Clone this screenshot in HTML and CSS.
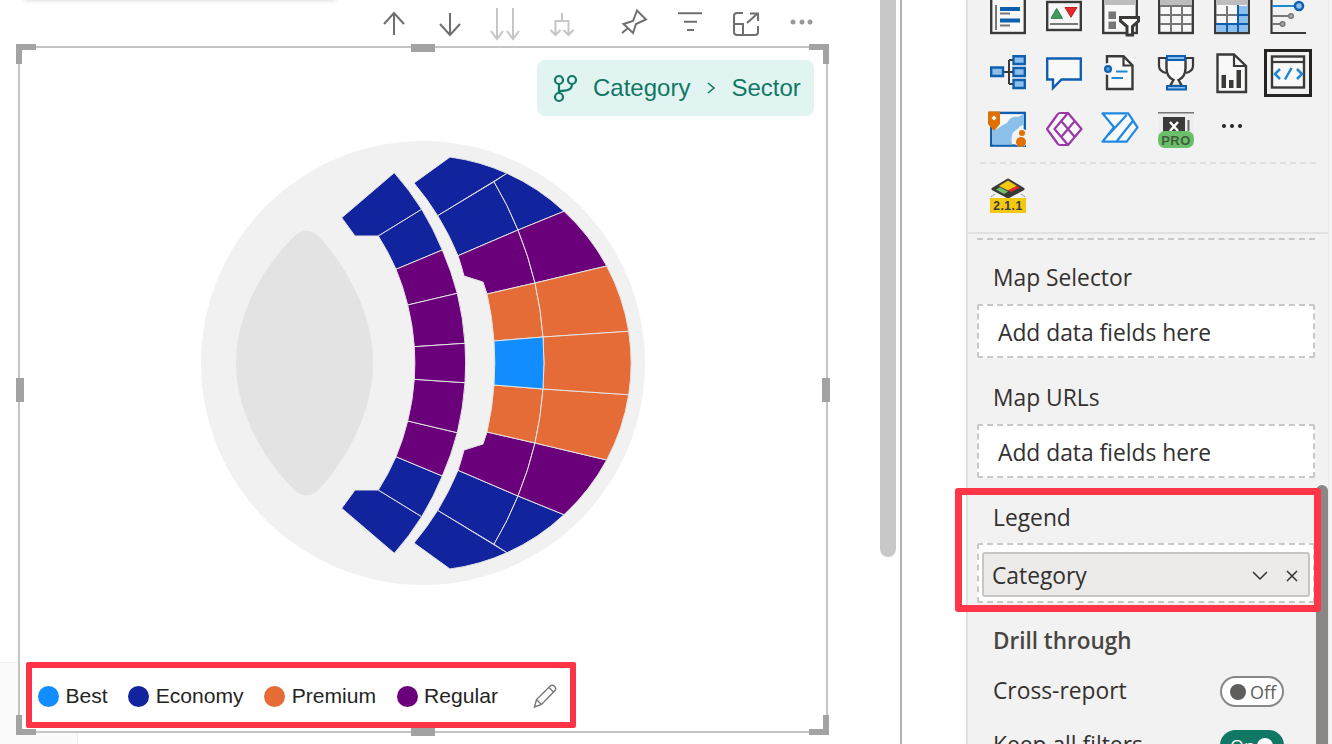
FILE: index.html
```html
<!DOCTYPE html>
<html lang="en">

<head>
	<meta charset="UTF-8" />
	<meta name="viewport" content="width=device-width, initial-scale=1.0" />
	<title>Seating map visual</title>
	<link rel="stylesheet" href="styles.css">
</head>

<body>
	<main class="canvas">
		<div class="page-tab"></div>
		<div class="ghost"></div>

		<div class="toolbar">
			<span class="tool"><svg class="tool-icon" viewBox="0 0 32 32"><path d="M16 7V29M6 18L16 7L26 18" /></svg></span>
			<span class="tool"><svg class="tool-icon" viewBox="0 0 32 32"><path d="M16 7V29M6 18L16 29L26 18" /></svg></span>
			<span class="tool"><svg class="tool-icon off" viewBox="0 0 32 32"><path d="M7 2V33M1 25L7 33L13 25M23 2V33M17 25L23 33L29 25" /></svg></span>
			<span class="tool"><svg class="tool-icon off" viewBox="0 0 32 32"><path d="M16 7V15M9.5 29V15H22.5V29M4.500 24L9.500 29L14.500 24M17.500 24L22.500 29L27.500 24" /></svg></span>
			<span class="tool tool-gap"><svg class="tool-icon" viewBox="0 0 32 32"><path d="M5.500 18L15 15L19 4.500L28 13.500L18 18L15 27ZM4 27L10 22" /></svg></span>
			<span class="tool"><svg class="tool-icon" viewBox="0 0 32 32"><path d="M4 7.300H28M10 15.700H23M13 24H20" /></svg></span>
			<span class="tool"><svg class="tool-icon" viewBox="0 0 32 32"><path d="M13 7H7A3 3 0 0 0 4 10V26A3 3 0 0 0 7 29H25A3 3 0 0 0 28 26V20M4 18H13V29M17 17L27 8M20 7.500H28V15" /></svg></span>
			<span class="tool"><svg class="tool-icon" viewBox="0 0 32 32"><circle class="dot" cx="7" cy="16" r="2.500" /><circle class="dot" cx="16" cy="16" r="2.500" /><circle class="dot" cx="24" cy="16" r="2.500" /></svg></span>
		</div>

		<section class="frame">
			<span class="corner tl"></span>
			<span class="corner tr"></span>
			<span class="corner bl"></span>
			<span class="corner br"></span>
			<span class="grip grip-top"></span>
			<span class="grip grip-bottom"></span>
			<span class="grip grip-left"></span>
			<span class="grip grip-right"></span>

			<div class="crumb">
				<svg class="crumb-icon" viewBox="0 0 24 28">
					<circle cx="6" cy="6" r="4" />
					<circle cx="19" cy="6" r="4" />
					<circle cx="6" cy="23" r="4" />
					<path d="M6 10V19M19 10C19 16 14 17 6 17" />
				</svg>
				<span>Category</span>
				<svg class="crumb-sep" viewBox="0 0 10 14"><path d="M2 2L8 7L2 12" /></svg>
				<span>Sector</span>
			</div>

			<svg class="seatmap" viewBox="201 141 444 444">
				<circle cx="423" cy="363" r="222" fill="#f1f1f1" />
				<path fill="#e3e3e3" d="M236 363C236 315 262 268 295 235.500Q306 226 318 235.500C348 268 373 315 373 363C373 411 348 458 318 490.500Q306 500 295 490.500C262 458 236 411 236 363Z" />
				<g id="half" stroke="#e4e4e4" stroke-width="1" stroke-linejoin="round">
					<path fill="#12239e" d="M414 183L450 157A208 208 0 0 1 507 173.300L437.700 215.700A287 287 0 0 0 414 183Z" />
					<path fill="#12239e" d="M437.700 215.700L494 181.700A354 354 0 0 1 518 230L458 255.700A287 287 0 0 0 437.700 215.700Z" />
					<path fill="#12239e" d="M494 181.700L507 173.300A208 208 0 0 1 564 211.300L518 230A354 354 0 0 0 494 181.700Z" />
					<path fill="#6b007b" d="M458 255.700L518 230A354 354 0 0 1 535 283L487 294L483 282L464 276A287 287 0 0 0 458 255.700Z" />
					<path fill="#6b007b" d="M518 230L564 211.300A208 208 0 0 1 606.700 266L535 283A354 354 0 0 0 518 230Z" />
					<path fill="#e66c37" d="M487 294L535 283A354 354 0 0 1 543 337L494 341A302 302 0 0 0 487 294Z" />
					<path fill="#e66c37" d="M535 283L606.700 266A208 208 0 0 1 628.700 331.300L543 337A354 354 0 0 0 535 283Z" />
					<path fill="#12239e" d="M341.700 217.700L394.300 172.700A291.500 291.500 0 0 1 421.700 209.300L378.300 236L355 236Z" />
					<path fill="#12239e" d="M378.300 236L421.700 209.300A291.500 291.500 0 0 1 442.300 250L396 269.300A238 238 0 0 0 378.300 236Z" />
					<path fill="#6b007b" d="M396 269.300L442.300 250A291.500 291.500 0 0 1 457.300 293.300L407.700 305A238 238 0 0 0 396 269.300Z" />
					<path fill="#6b007b" d="M407.700 305L457.300 293.300A291.500 291.500 0 0 1 465 343.300L414.300 346.700A238 238 0 0 0 407.700 305Z" />
				</g>
				<use href="#half" transform="matrix(1 0 0 -1 0 726)" />
				<g stroke="#e4e4e4" stroke-width="1">
					<path fill="#e66c37" d="M543 337L628.700 331.300A208 208 0 0 1 628.700 394.700L543 389A354 354 0 0 0 543 337Z" />
					<path fill="#118dff" d="M494 341L543 337A354 354 0 0 1 543 389L494 385A302 302 0 0 0 494 341Z" />
					<path fill="#6b007b" d="M414.300 346.700L465 343.300A291.500 291.500 0 0 1 465 382.700L414.300 379.300A238 238 0 0 0 414.300 346.700Z" />
				</g>
			</svg>

			<div class="legend">
				<span class="key best"></span><span class="key-name">Best</span>
				<span class="key economy"></span><span class="key-name">Economy</span>
				<span class="key premium"></span><span class="key-name">Premium</span>
				<span class="key regular"></span><span class="key-name">Regular</span>
				<svg class="pencil" viewBox="0 0 24 24"><path d="M1.500 23L3.500 15.500L17.500 1.800Q19.500 0.500 21.500 2.300Q23.500 4.500 22 6.500L8.500 20.500ZM3.500 15.500L8.500 20.500M16 3.500L20.500 8" /></svg>
			</div>
		</section>
	</main>

	<div class="track"><div class="thumb"></div></div>
	<div class="filters"></div>

	<aside class="panel">
		<div class="gallery">
			<svg class="viz" viewBox="0 0 36 36"><rect class="box" x="1.200" y="-3" width="33.600" height="37" /><path fill="#0f5fb0" d="M10 8H30V12H10ZM10 19.500H30V23.500H10Z" /><path fill="#777" d="M5 6H7V31H5ZM10 13.500H20V15.500H10ZM10 25.500H20V27.500H10Z" /></svg>
			<svg class="viz" viewBox="0 0 36 36"><rect class="box" x="1.200" y="3" width="33.600" height="28" /><path fill="#3f9e5c" stroke="#2f7d48" d="M10.700 9.500L16.500 19.300H5Z" /><path fill="#e22a2a" stroke="#c42020" d="M19 8.500H31L25 18.300Z" /><path fill="#777" d="M4 24H32V26H4Z" /></svg>
			<svg class="viz" viewBox="0 0 36 36"><rect class="box" x="1.200" y="-3" width="33.600" height="37" /><path fill="#bdbdbd" d="M2 0H34V6H2Z" /><path fill="#777" d="M6.500 12.500H14V20H6.500ZM6.500 22.500H14V30H6.500Z" /><path fill="#fff" stroke="#3b3a39" stroke-width="3" d="M18.500 18.500H36.500V22L30.500 27.500V36H25V27.500L18.500 22Z" /></svg>
			<svg class="viz" viewBox="0 0 36 36"><rect class="box" x="1.200" y="-3" width="33.600" height="37" /><path fill="#bdbdbd" d="M2 0H34V6H2Z" /><path fill="#777" d="M2 6H34V8H2ZM2 15H34V17H2ZM2 24H34V26H2ZM12 6H14V33H12ZM23 6H25V33H23Z" /></svg>
			<svg class="viz" viewBox="0 0 36 36"><rect class="box" x="1.200" y="-3" width="33.600" height="37" /><path fill="#bdbdbd" d="M2 0H34V6H2Z" /><path fill="#8cbfe9" d="M23 7H34V33H23ZM2 24H23V33H2Z" /><path fill="#777" d="M2 15H23V17H2ZM12 7H14V24H12Z" /><path fill="#0f5fb0" d="M23 6H25V33H23ZM2 24H34V26H2ZM12 26H14V33H12ZM25 15H34V17H25Z" /></svg>
			<svg class="viz" viewBox="0 0 36 36"><path fill="none" stroke="#3b3a39" stroke-width="2.200" d="M1.500 -2V34H36" /><path stroke="#1e88d0" stroke-width="2" d="M2 7H25" /><path stroke="#777" stroke-width="2" d="M2 17H18M2 25H10" /><circle cx="29" cy="7" r="4" fill="#8cbfe9" stroke="#0f5fb0" stroke-width="2.500" /><circle cx="21" cy="17" r="2.300" fill="#aaa" stroke="#777" stroke-width="1.500" /><circle cx="12.500" cy="25" r="2.300" fill="#aaa" stroke="#777" stroke-width="1.500" /></svg>

			<svg class="viz" viewBox="0 0 36 36"><path fill="none" stroke="#3b3a39" stroke-width="2" d="M14 17H19M19 5V29M19 5H23M19 17H23M19 29H23" /><path fill="#8cbfe9" stroke="#0f5fb0" stroke-width="2.400" d="M1.200 12.500H13V21H1.200ZM23.500 1.200H34.800V9H23.500ZM23.500 13H34.800V21H23.500ZM23.500 25H34.800V33H23.500Z" /></svg>
			<svg class="viz" viewBox="0 0 36 36"><path fill="#f8f8f8" stroke="#0f5fb0" stroke-width="2.400" d="M1.200 3.500H34.800V24.500H15.500L7 33V24.500H1.200Z" /></svg>
			<svg class="viz" viewBox="0 0 36 36"><path class="box" d="M5 1.200H21.500L30.500 10.500V34H5Z" /><path fill="none" stroke="#3b3a39" stroke-width="2.200" d="M21.500 1.200V10.500H30.500" /><circle cx="6" cy="14" r="6" fill="#f2f2f2" /><circle cx="6" cy="14" r="3" fill="#4a9bdc" stroke="#0f5fb0" stroke-width="2" /><path stroke="#1e88d0" stroke-width="2" d="M14 16.500H25.500M9.500 23H21" /></svg>
			<svg class="viz" viewBox="0 0 36 36"><path fill="none" stroke="#3b3a39" stroke-width="2.200" d="M9 3H1V11Q1 16 8 18M27 3H35V11Q35 16 28 18" /><path class="box" d="M8.500 4H27.500V13Q27.500 22 20.500 25L24 31H12L15.500 25Q8.500 22 8.500 13Z" /><path fill="#8cbfe9" stroke="#0f5fb0" stroke-width="2" d="M9 1H27V5H9ZM9 31H28V34.500H9Z" /></svg>
			<svg class="viz" viewBox="0 0 36 36"><path class="box" d="M3.500 -0.500H20L32 11V37H3.500Z" /><path fill="none" stroke="#3b3a39" stroke-width="2.200" d="M20 -0.500V11H32" /><path fill="#3b3a39" d="M7.500 20H12V33H7.500ZM15 25H19.500V33H15ZM22.500 15H27V33H22.500Z" /></svg>
			<svg class="viz picked" viewBox="0 0 36 36"><rect class="box" x="2" y="1.500" width="32" height="31" /><path stroke="#3b3a39" stroke-width="2.200" d="M2 7H34" /><path fill="none" stroke="#1e88d0" stroke-width="2.500" d="M10 14L5 19L10 24M27 14L32 19L27 24M21.500 13L15 24.500" /></svg>

			<svg class="viz" viewBox="0 0 36 36"><rect x="1.200" y="1.900" width="33.600" height="32.700" fill="#f8f8f8" stroke="#0f5fb0" stroke-width="2.400" /><path fill="#8cbfe9" d="M2.400 33.400V20C8 18 12 14 17 12C20 6 24 5 28 6L33.600 3.100V14C30 14 28 18 26 20C22 21 21 26 22 33.400Z" /><circle cx="31" cy="26.500" r="9" fill="#f2f2f2" /><path fill="#e07000" d="M-2 0.500H10V13L4 20L-2 13Z" /><path fill="#fff" d="M1.500 7L4 4.500L6.500 7L4 9.500Z" /><circle cx="32" cy="22" r="3" fill="#e07000" /><circle cx="31" cy="31" r="5" fill="#e07000" /></svg>
			<svg class="viz" viewBox="0 0 36 36"><path fill="#fafafa" stroke="#9b39a8" stroke-width="2.200" stroke-linejoin="round" d="M22 2H14Q12.500 2 11.500 3.500L1 18L11.500 32.500Q12.500 34 14 34H22" /><path fill="#fafafa" stroke="#9b39a8" stroke-width="2.200" stroke-linejoin="round" d="M22 2L35.500 18L22 34L8.500 18ZM15.200 10L28.800 26M28.800 10L15.200 26" /></svg>
			<svg class="viz" viewBox="0 0 36 36"><path fill="#fafafa" stroke="#1e88e5" stroke-width="2.200" stroke-linejoin="round" d="M0.500 2.300H26.300L35.500 16.300L24.700 30.700H0.500L12 16.300ZM24.700 4L6.300 24M31 9.700L14.300 30.700" /></svg>
			<svg class="viz" viewBox="0 0 36 36"><path fill="#eeeeee" d="M0 1H36V24H0Z" /><path fill="#777" d="M0 1H36V2.500H0Z" /><path fill="#3b3a39" d="M5 6H27V21H5Z" /><path fill="#666" d="M29.500 9H31.500V20H29.500Z" /><path stroke="#fff" stroke-width="2.500" d="M12 11L20 20M20 11L12 20" /><rect x="0" y="20" width="36" height="17" rx="7" fill="#6cbf6a" /><text class="pro" x="18" y="33.500">PRO</text></svg>
			<svg class="viz" viewBox="0 0 36 36"><circle fill="#252423" cx="10" cy="15" r="2" /><circle fill="#252423" cx="18" cy="15" r="2" /><circle fill="#252423" cx="26" cy="15" r="2" /></svg>
		</div>

		<div class="rule-dash"></div>

		<svg class="viz custom" viewBox="0 0 36 36"><path fill="#3b3a39" stroke="#3b3a39" stroke-width="3" stroke-linejoin="round" d="M18 2L33 11L18 19L3 11Z" /><path fill="#f2c811" d="M18 2.500L27 8L18 12.500L9 8Z" /><path fill="#6cbf6a" d="M6 11.500L14 16L18 13.800L10 9.300Z" /><path fill="#e22a2a" d="M21.500 13.800L30 9.500L26.500 8L18 12.500Z" /><path fill="none" stroke="#999" d="M1 19L5 16M35 19L31 16" /><rect x="0" y="20" width="36" height="15" fill="#f2c811" /><text class="ver" x="18" y="32">2.1.1</text></svg>

		<div class="rule-solid"></div>
		<div class="rule-dash2"></div>

		<div class="well-label first">Map Selector</div>
		<div class="well">Add data fields here</div>
		<div class="well-label">Map URLs</div>
		<div class="well">Add data fields here</div>

		<div class="legend-field">
			<div class="callout"></div>
			<div class="well-label">Legend</div>
			<div class="well well-full">
				<div class="chip">
					<span>Category</span>
					<svg class="chip-icon chev" viewBox="0 0 16 10"><path d="M1 1L8 8L15 1" /></svg>
					<svg class="chip-icon cross" viewBox="0 0 12 12"><path d="M1 1L11 11M11 1L1 11" /></svg>
				</div>
			</div>
		</div>

		<div class="sub-title">Drill through</div>
		<div class="option">
			<span class="option-name">Cross-report</span>
			<span class="toggle"><i class="knob"></i>Off</span>
		</div>
		<div class="option option-last">
			<span class="option-name">Keep all filters</span>
			<span class="toggle on">On<i class="knob"></i></span>
		</div>

		<div class="panel-thumb"></div>
	</aside>
	<div class="edge"></div>
</body>

</html>
```

FILE: styles.css
```css
* {
	margin: 0;
	padding: 0;
	box-sizing: border-box;
}

body {
	display: flex;
	height: 744px;
	overflow: hidden;
	background-color: white;
	font-family: "Liberation Sans", Arial, sans-serif;
}

/* report canvas */
.canvas {
	position: relative;
	width: 880px;
	flex: none;
	padding-left: 18px;
}

.page-tab {
	position: absolute;
	left: 0;
	top: 662px;
	width: 78px;
	height: 82px;
	background-color: #fbfbfb;
	border-top: 1px solid #eeeeee;
	border-right: 1px solid #eeeeee;
}

.ghost {
	position: absolute;
	left: 24px;
	top: -10px;
	width: 312px;
	height: 10px;
	box-shadow: 0 0 5px rgba(0, 0, 0, 0.18);
}

.toolbar {
	display: flex;
	justify-content: flex-end;
	height: 46px;
	padding-right: 50px;
}

.tool {
	width: 56px;
	display: flex;
	justify-content: center;
	padding-top: 6px;
}

.tool-gap {
	margin-left: 16px;
}

.tool-icon {
	width: 32px;
	height: 32px;
	fill: none;
	stroke: #6f6f6f;
	stroke-width: 2;
	overflow: visible;
}

.tool-icon.off {
	stroke: #c6c6c6;
}

.tool-icon .dot {
	fill: #9a9a9a;
	stroke: none;
}

.frame {
	position: relative;
	display: flex;
	flex-direction: column;
	width: 810px;
	height: 687px;
	background-color: white;
	border: 2px solid #c4c4c4;
}

.corner {
	position: absolute;
	width: 20px;
	height: 20px;
	border: 0 solid #a3a3a3;
}

.corner.tl {
	left: -4px;
	top: -4px;
	border-width: 6px 0 0 6px;
}

.corner.tr {
	right: -3px;
	top: -4px;
	border-width: 6px 6px 0 0;
}

.corner.bl {
	left: -4px;
	bottom: -4px;
	border-width: 0 0 6px 6px;
}

.corner.br {
	right: -3px;
	bottom: -4px;
	border-width: 0 6px 6px 0;
}

.grip {
	position: absolute;
	background-color: #a3a3a3;
}

.grip-top,
.grip-bottom {
	left: 391px;
	width: 24px;
	height: 8px;
}

.grip-top {
	top: -4px;
}

.grip-bottom {
	bottom: -5px;
}

.grip-left,
.grip-right {
	top: 330px;
	width: 8px;
	height: 24px;
}

.grip-left {
	left: -4px;
}

.grip-right {
	right: -4px;
}

.crumb {
	align-self: flex-end;
	display: flex;
	align-items: center;
	width: 277px;
	height: 56px;
	margin: 12px 12px 0 0;
	padding-left: 16px;
	border-radius: 8px;
	background-color: #e2f4f2;
	color: #117865;
	font-size: 24px;
}

.crumb-icon {
	width: 24px;
	height: 28px;
	margin-right: 16px;
	fill: none;
	stroke: #117865;
	stroke-width: 2.2;
	overflow: visible;
}

.crumb-sep {
	width: 10px;
	height: 14px;
	margin: 0 15px 0 16px;
	fill: none;
	stroke: #117865;
	stroke-width: 1.6;
}

.seatmap {
	display: block;
	width: 444px;
	height: 444px;
	margin: 25px 0 0 181px;
	flex: none;
}

.legend {
	position: relative;
	z-index: 2;
	display: flex;
	align-items: center;
	width: 550px;
	height: 66px;
	margin: 77px 0 0 6px;
	padding: 2px 13px 0 6px;
	border: 6px solid #fd3446;
	border-radius: 2px;
	background-color: white;
	color: #252423;
	font-size: 21.1px;
}

.key {
	width: 21px;
	height: 21px;
	border-radius: 50%;
	margin-right: 6.5px;
}

.key-name {
	margin-right: 20.5px;
}

.key.best {
	background-color: #118dff;
}

.key.economy {
	background-color: #12239e;
}

.key.premium {
	background-color: #e66c37;
}

.key.regular {
	background-color: #6b007b;
}

.pencil {
	width: 24px;
	height: 24px;
	margin-left: auto;
	fill: none;
	stroke: #777;
	stroke-width: 1.4;
}

/* scroll bar and collapsed filter pane */
.track {
	width: 20px;
	flex: none;
}

.thumb {
	width: 16px;
	height: 557px;
	background-color: #c8c8c8;
	border-radius: 0 0 8px 8px;
}

.filters {
	width: 66px;
	flex: none;
	border-left: 2px solid #b3b0ad;
}

/* visualizations pane */
.panel {
	position: relative;
	width: 362px;
	flex: none;
	padding-left: 9px;
	background-color: #f2f2f2;
	border-left: 2px solid #e1e1e1;
	color: #323130;
	font-family: "Open Sans", "Noto Sans", sans-serif;
	font-size: 22.8px;
}

.edge {
	flex: 1;
	background-color: #f4f4f4;
	border-left: 1px solid #ebebeb;
}

.gallery {
	display: grid;
	grid-template-columns: repeat(6, 36px);
	grid-auto-rows: 36px;
	gap: 20px;
	margin: -1px 0 0 13px;
}

.viz {
	display: block;
	width: 36px;
	height: 36px;
	overflow: visible;
}

.viz .box {
	fill: #f8f8f8;
	stroke: #3b3a39;
	stroke-width: 2.4;
}

.viz.picked {
	outline: 3px solid #252423;
	outline-offset: 3px;
}

.viz .pro {
	font-family: "Liberation Sans", sans-serif;
	font-size: 13px;
	font-weight: bold;
	letter-spacing: 0.5px;
	text-anchor: middle;
	fill: #3f5f3c;
}

.viz .ver {
	font-family: "Liberation Sans", sans-serif;
	font-size: 12px;
	font-weight: bold;
	letter-spacing: 0.6px;
	text-anchor: middle;
	fill: #3b3a39;
}

.rule-dash {
	width: 336px;
	margin: 15px 0 0 3px;
	border-top: 2px dashed #e0e0e0;
}

.custom {
	margin: 14px 0 0 13px;
}

.rule-solid {
	margin: 18px 0 0 -9px;
	border-top: 2px solid #e1e1e1;
}

.rule-dash2 {
	width: 338px;
	margin-top: 4px;
	border-top: 2px dashed #c8c8c8;
}

.well-label {
	height: 32px;
	margin: 23px 0 0 16px;
	line-height: 33px;
}

.well-label.first {
	margin-top: 21px;
}

.well {
	width: 338px;
	height: 54px;
	margin-top: 11px;
	padding-left: 19px;
	border: 2px dashed #c8c8c8;
	border-radius: 2px;
	background-color: white;
	line-height: 54px;
}

.legend-field {
	position: relative;
}

.callout {
	position: absolute;
	left: -22px;
	top: -13px;
	width: 366px;
	height: 124px;
	border: 7px solid #ff3548;
	border-radius: 3px;
	z-index: 3;
}

.well-full {
	height: 60px;
	margin-top: 10px;
	padding: 7px 3px 4px;
}

.chip {
	display: flex;
	align-items: center;
	height: 45px;
	padding: 2px 0 0 8px;
	border: 2px solid #c8c6c4;
	border-radius: 3px;
	background-color: #edebe9;
	line-height: 41px;
}

.chip-icon {
	fill: none;
	stroke: #323130;
	stroke-width: 1.5;
}

.chev {
	width: 16px;
	height: 10px;
	margin-left: auto;
}

.cross {
	width: 12px;
	height: 12px;
	margin: 0 10px 0 18px;
}

.sub-title {
	height: 32px;
	margin: 22px 0 0 16px;
	line-height: 32px;
	font-size: 22.5px;
	font-weight: 600;
	color: #484644;
}

.option {
	display: flex;
	align-items: center;
	justify-content: space-between;
	height: 31px;
	width: 291px;
	margin: 19px 0 0 16px;
}

.option-name {
	margin-top: -2px;
}

.option-last {
	margin-top: 23px;
}

.toggle {
	display: flex;
	align-items: center;
	width: 64px;
	height: 31px;
	padding-left: 8px;
	border: 2px solid #8a8886;
	border-radius: 16px;
	background-color: white;
	color: #605e5c;
	font-size: 18px;
}

.knob {
	width: 16px;
	height: 16px;
	margin-right: 4px;
	border-radius: 50%;
	background-color: #605e5c;
}

.toggle.on {
	justify-content: space-between;
	padding-right: 9px;
	border-color: #117865;
	background-color: #117865;
	color: white;
}

.toggle.on .knob {
	margin-right: 0;
	background-color: white;
}

.panel-thumb {
	position: absolute;
	right: 0;
	top: 485px;
	bottom: 0;
	width: 12px;
	background-color: #8a8886;
	border-radius: 6px 6px 0 0;
}
```
